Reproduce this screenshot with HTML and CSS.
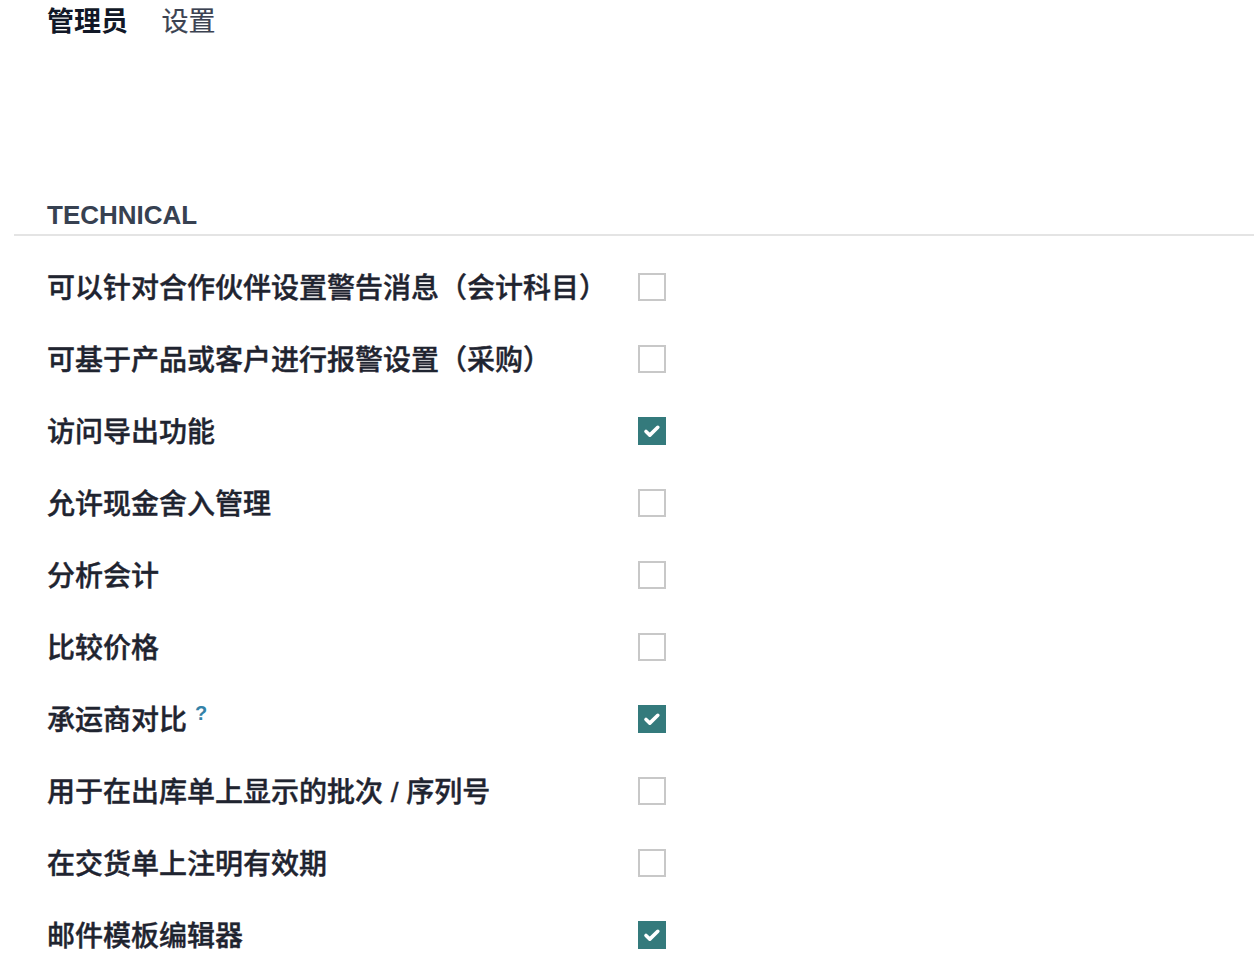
FILE: index.html
```html
<!DOCTYPE html>
<html lang="zh-CN">
<head>
    <meta charset="UTF-8">
    <meta name="viewport" content="width=device-width, initial-scale=1.0">
    <title>设置</title>
    <link rel="stylesheet" href="styles.css">
</head>
<body>

    <div class="breadcrumb">
        <span class="crumb-main">管理员</span>
        <span class="crumb-sub">设置</span>
    </div>

    <h2 class="section-title">TECHNICAL</h2>

    <div class="settings">
        <div class="row">
            <label class="label">可以针对合作伙伴设置警告消息（会计科目）</label>
            <span class="box"></span>
        </div>
        <div class="row">
            <label class="label">可基于产品或客户进行报警设置（采购）</label>
            <span class="box"></span>
        </div>
        <div class="row">
            <label class="label">访问导出功能</label>
            <span class="box checked"><svg viewBox="0 0 28 28"><path d="M8 14.5l3.8 3.6 8-7.8"/></svg></span>
        </div>
        <div class="row">
            <label class="label">允许现金舍入管理</label>
            <span class="box"></span>
        </div>
        <div class="row">
            <label class="label">分析会计</label>
            <span class="box"></span>
        </div>
        <div class="row">
            <label class="label">比较价格</label>
            <span class="box"></span>
        </div>
        <div class="row">
            <label class="label">承运商对比<sup class="help">?</sup></label>
            <span class="box checked"><svg viewBox="0 0 28 28"><path d="M8 14.5l3.8 3.6 8-7.8"/></svg></span>
        </div>
        <div class="row">
            <label class="label">用于在出库单上显示的批次 / 序列号</label>
            <span class="box"></span>
        </div>
        <div class="row">
            <label class="label">在交货单上注明有效期</label>
            <span class="box"></span>
        </div>
        <div class="row">
            <label class="label">邮件模板编辑器</label>
            <span class="box checked"><svg viewBox="0 0 28 28"><path d="M8 14.5l3.8 3.6 8-7.8"/></svg></span>
        </div>
    </div>

</body>
</html>
```

FILE: styles.css
```css
body {
    margin: 0;
    font-family: "Liberation Sans", "Noto Sans CJK SC", sans-serif;
    background: #fff;
    color: #1f2430;
}
.breadcrumb {
    height: 44px;
    line-height: 44px;
    padding-left: 47px;
    font-size: 27px;
}
.crumb-main {
    font-weight: 700;
    color: #111827;
}
.crumb-sub {
    margin-left: 26px;
    color: #3b4251;
    -webkit-text-stroke: 0.2px #3b4251;
}
.section-title {
    margin: 155px 0 0 14px;
    padding: 0 0 3px 33px;
    font-size: 26px;
    line-height: 32px;
    font-weight: 700;
    color: #374151;
    border-bottom: 2px solid #e4e4e4;
}
.settings {
    margin-top: 15px;
    padding-left: 47px;
}
.row {
    display: flex;
    align-items: center;
    height: 72px;
}
.label {
    width: 591px;
    margin-top: -3px;
    font-family: "Liberation Sans", "Noto Sans CJK SC Medium", "Noto Sans CJK SC", sans-serif;
    font-size: 28px;
    font-weight: 500;
    color: #1f2430;
    /* thicken the regular CJK face a little, closer to a medium weight */
    -webkit-text-stroke: 0.4px #1f2430;
}
.help {
    margin-left: 8px;
    font-size: 20px;
    font-weight: 700;
    color: #3482a8;
    vertical-align: 10px;
    -webkit-text-stroke: 0;
}
.box {
    width: 28px;
    height: 28px;
    box-sizing: border-box;
    border: 2px solid #c8c8c8;
    background: #fff;
}
.box.checked {
    border: 0;
    background: #347a7c;
}
.box svg {
    display: block;
    width: 28px;
    height: 28px;
}
.box svg path {
    fill: none;
    stroke: #fff;
    stroke-width: 3.6;
    stroke-linecap: round;
    stroke-linejoin: round;
}
```
